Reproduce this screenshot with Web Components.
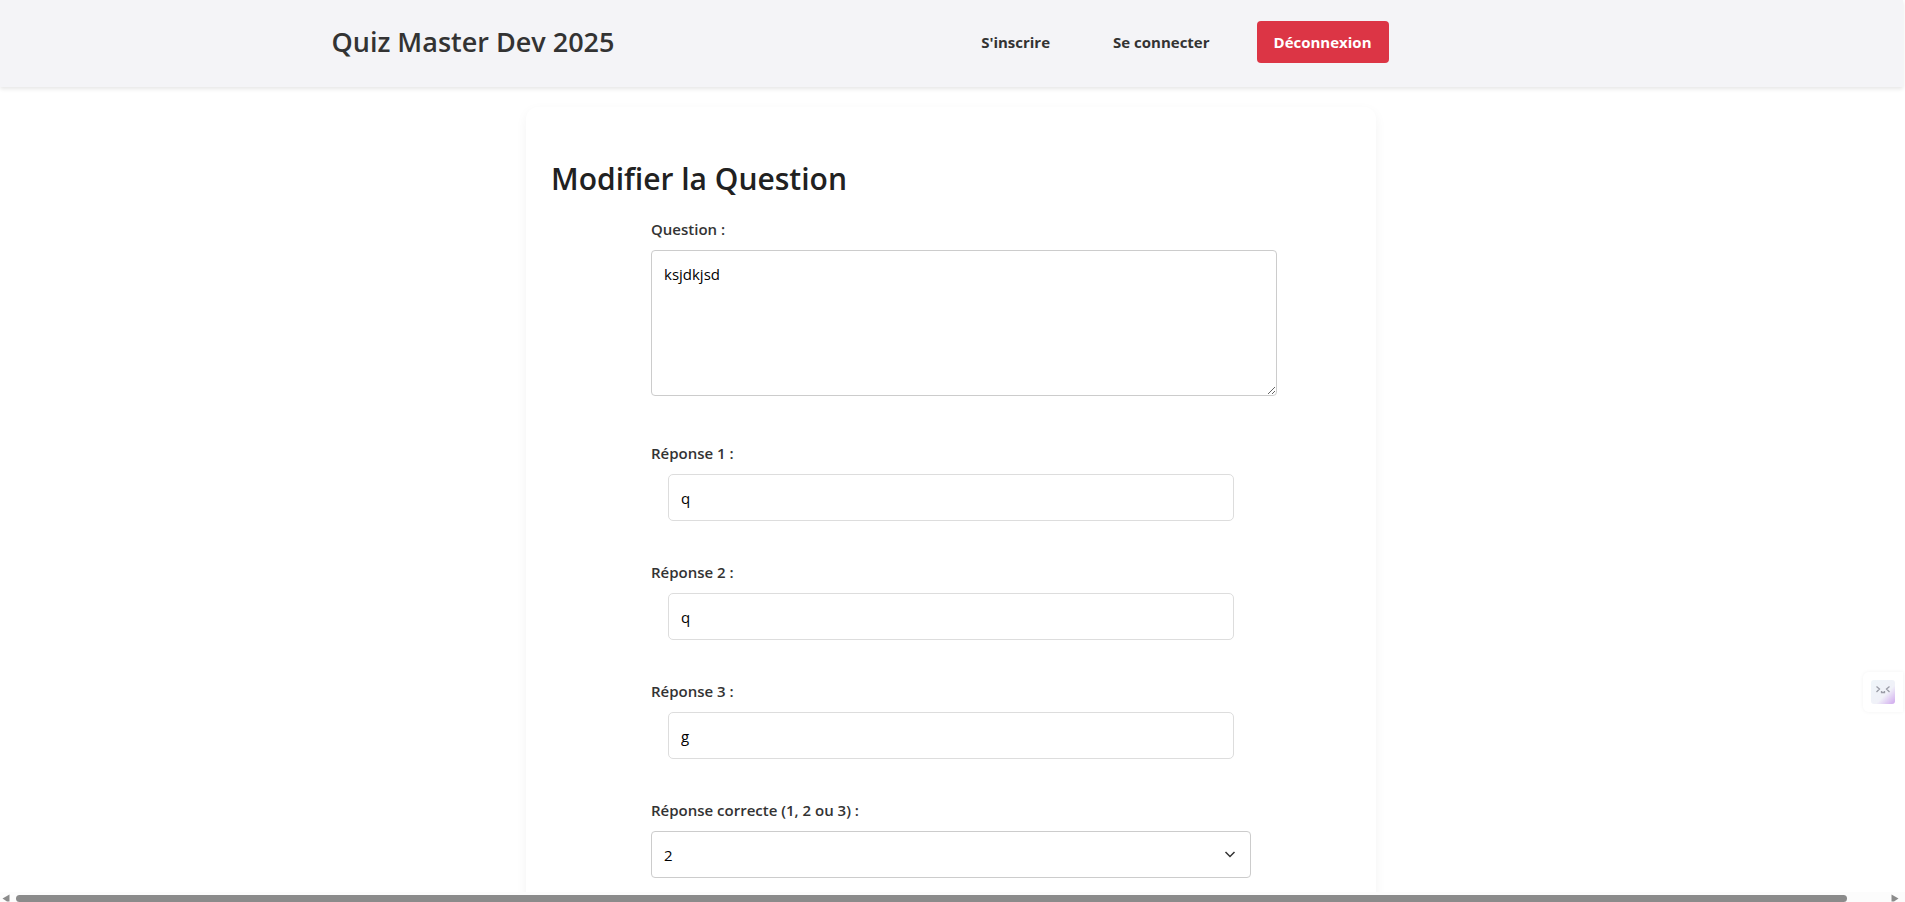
<!DOCTYPE html>
<html lang="fr">
<head>
<meta charset="utf-8">
<meta name="viewport" content="width=device-width, initial-scale=1">
<title>Quiz Master Dev 2025</title>
<style>
  html, body { margin: 0; height: 100%; }
  body {
    font: 400 15px/24px "Open Sans", "Noto Sans", sans-serif;
    color: #212529;
    background: #fff;
  }
</style>
</head>
<body>
<quiz-app>
  <quiz-header slot="header">
    Quiz Master Dev 2025
    <nav-link slot="nav" href="#inscription">S'inscrire</nav-link>
    <nav-link slot="nav" href="#connexion">Se connecter</nav-link>
    <logout-button slot="nav">Déconnexion</logout-button>
  </quiz-header>
  <quiz-card heading="Modifier la Question">
    <question-field value="ksjdkjsd">Question :</question-field>
    <answer-field value="q">Réponse 1 :</answer-field>
    <answer-field value="q">Réponse 2 :</answer-field>
    <answer-field value="g">Réponse 3 :</answer-field>
    <choice-field value="2" options="1,2,3">Réponse correcte (1, 2 ou 3) :</choice-field>
  </quiz-card>
  <side-widget slot="widget"></side-widget>
  <scroll-strip slot="footer"></scroll-strip>
</quiz-app>

<script>
const FIELD_CSS = `
  *, *::before { box-sizing: border-box; }
  label { display: block; margin-bottom: 9px; font-weight: 600; color: #333; }
  textarea, input, select {
    display: block;
    font: inherit;
    color: #000;
    background: #fff;
    border: 1px solid #ccc;
    border-radius: 4px;
    padding: 11px 12px;
    margin: 0;
  }`;

class Base extends HTMLElement {
  constructor() {
    super();
    this.attachShadow({ mode: 'open' });
  }
  connectedCallback() {
    this.shadowRoot.innerHTML = this.render();
  }
}

customElements.define('quiz-app', class extends Base {
  render() {
    return `<style>
      :host { display: flex; flex-direction: column; height: 100vh; overflow: hidden; }
      main { flex: 1; min-height: 0; overflow: hidden; padding: 20px 0 0; margin-right: 3px; }
    </style>
    <slot name="header"></slot>
    <main><slot></slot></main>
    <slot name="widget"></slot>
    <slot name="footer"></slot>`;
  }
});

customElements.define('quiz-header', class extends Base {
  render() {
    return `<style>
      :host { display: block; position: relative; background: #f4f4f7; box-shadow: 0 2px 4px rgba(0,0,0,.1); margin-right: 2px; }
      header { display: flex; align-items: center; justify-content: space-between;
        box-sizing: border-box; max-width: 1240px; margin: 0 auto; padding: 21px 183px 24px 0; }
      .brand { font-size: 27px; line-height: 42px; font-weight: 600; color: #333; }
      nav { display: flex; align-items: center; gap: 31px; }
    </style>
    <header><div class="brand"><slot></slot></div><nav><slot name="nav"></slot></nav></header>`;
  }
});

customElements.define('nav-link', class extends Base {
  render() {
    return `<style>
      :host { display: block; }
      a { display: block; padding: 8px 16px; font-weight: 700; color: #333; text-decoration: none; }
    </style>
    <a href="${this.getAttribute('href')}"><slot></slot></a>`;
  }
});

customElements.define('logout-button', class extends Base {
  render() {
    return `<style>
      :host { display: block; }
      button { display: block; margin: 0; border: 0; border-radius: 4px; padding: 9px 17px;
        font: inherit; font-weight: 700; color: #fff; background: #dc3545; cursor: pointer; }
    </style>
    <button type="button"><slot></slot></button>`;
  }
});

customElements.define('quiz-card', class extends Base {
  render() {
    return `<style>
      :host { display: block; box-sizing: border-box; max-width: 850px; margin: 0 auto; padding: 53px 25px 40px;
        background: #fff; border-radius: 12px; box-shadow: 0 4px 12px rgba(0,0,0,.05); }
      h1 { margin: 0 0 19px; font-size: 30px; line-height: 38px; font-weight: 600; color: #212121; }
      form { max-width: 600px; margin: 0 auto; display: flex; flex-direction: column; gap: 39px; }
    </style>
    <h1>${this.getAttribute('heading')}</h1>
    <form><slot></slot></form>`;
  }
});

customElements.define('question-field', class extends Base {
  render() {
    return `<style>${FIELD_CSS}
      :host { display: block; padding-bottom: 6px; }
      textarea { width: calc(100% + 26px); height: 146px; resize: both; }
    </style>
    <label for="c"><slot></slot></label>
    <textarea id="c">${this.getAttribute('value')}</textarea>`;
  }
});

customElements.define('answer-field', class extends Base {
  render() {
    return `<style>${FIELD_CSS}
      :host { display: block; }
      input { width: calc(100% - 34px); height: 47px; margin-left: 17px; border-color: #ddd; border-radius: 5px; }
    </style>
    <label for="c"><slot></slot></label>
    <input id="c" type="text" value="${this.getAttribute('value')}">`;
  }
});

customElements.define('choice-field', class extends Base {
  render() {
    const value = this.getAttribute('value');
    const options = this.getAttribute('options').split(',')
      .map(o => `<option${o === value ? ' selected' : ''}>${o}</option>`).join('');
    return `<style>${FIELD_CSS}
      :host { display: block; }
      .wrap { display: grid; align-items: center; }
      .wrap > * { grid-area: 1 / 1; }
      select { width: 100%; height: 47px; appearance: none; padding: 0 12px; }
      svg { justify-self: end; margin-right: 15px; pointer-events: none; }
    </style>
    <label for="c"><slot></slot></label>
    <div class="wrap">
      <select id="c">${options}</select>
      <svg width="12" height="12" viewBox="0 0 12 12" aria-hidden="true">
        <path d="M1.5 3 L6 7.5 L10.5 3" fill="none" stroke="#333" stroke-width="1.5"/>
      </svg>
    </div>`;
  }
});

customElements.define('side-widget', class extends Base {
  render() {
    return `<style>
      :host { position: fixed; right: 2px; bottom: 190px; display: block; box-sizing: border-box; width: 40px; padding: 8px;
        background: #fff; border-radius: 6px 0 0 6px; box-shadow: 0 0 4px rgba(0,0,0,.05); }
      svg { display: block; }
    </style>
    <svg width="24" height="24" viewBox="0 0 24 24" role="img" aria-label="Assistant">
      <defs><linearGradient id="g" x1="0" y1="0" x2="1" y2="1">
        <stop offset="0" stop-color="#eff5f9"/><stop offset=".6" stop-color="#f0f1f8"/><stop offset="1" stop-color="#cfa6ee"/>
      </linearGradient></defs>
      <rect width="24" height="24" rx="3" fill="url(#g)"/>
      <path d="M5.500 6.500 L8.500 9 L5.500 12 M18.500 6.500 L15.500 9 L18.500 12 M10.500 11 V12.500 H13.500 V11" fill="none" stroke="#9a9ca6" stroke-width="1.300"/>
    </svg>`;
  }
});

customElements.define('scroll-strip', class extends Base {
  render() {
    return `<style>
      :host { display: flex; align-items: flex-end; justify-content: space-between; height: 10px; background: #fcfcfc; position: relative; }
      .thumb { flex: 1; height: 7px; margin: 0 44px 0 6px; background: #8b8b8b; border-radius: 4px; }
      svg { display: block; flex: none; }
      .end { margin-right: 6px; }
      .start { margin-left: 2px; }
    </style>
    <svg class="start" width="8" height="8" viewBox="0 0 8 8" aria-hidden="true"><path d="M7.500 .5 V7.500 L5 7.500 L.5 4.500 Z" fill="#8b8b8b"/></svg>
    <div class="thumb"></div>
    <svg class="end" width="8" height="8" viewBox="0 0 8 8" aria-hidden="true"><path d="M.5 .5 V7.500 L3 7.500 L7.500 4.500 Z" fill="#8b8b8b"/></svg>`;
  }
});
</script>
</body>
</html>
